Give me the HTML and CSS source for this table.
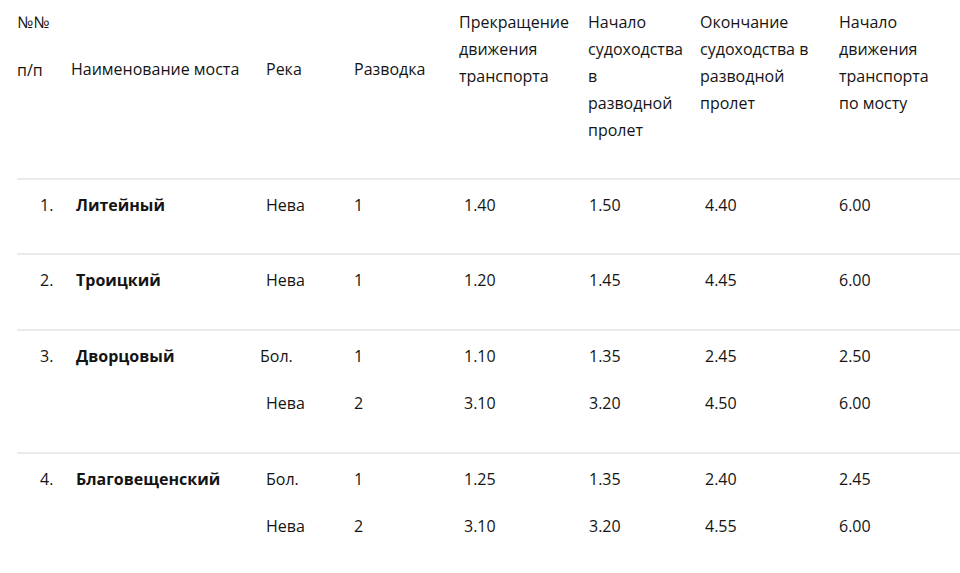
FILE: index.html
```html
<!DOCTYPE html>
<html lang="ru">
<head>
<meta charset="utf-8">
<title>График разводки мостов</title>
<link rel="stylesheet" href="styles.css">
</head>
<body>
<table class="bridges">
  <colgroup>
    <col class="c-num">
    <col class="c-name">
    <col class="c-river">
    <col class="c-lift">
    <col class="c-stop">
    <col class="c-open">
    <col class="c-close">
    <col class="c-resume">
  </colgroup>
  <thead>
    <tr>
      <th><p>№№</p><p>п/п</p></th>
      <th class="low"><p>Наименование моста</p></th>
      <th class="low"><p>Река</p></th>
      <th class="low"><p>Разводка</p></th>
      <th><p>Прекращение<br>движения<br>транспорта</p></th>
      <th><p>Начало<br>судоходства<br>в<br>разводной<br>пролет</p></th>
      <th><p>Окончание<br>судоходства в<br>разводной<br>пролет</p></th>
      <th><p>Начало<br>движения<br>транспорта<br>по мосту</p></th>
    </tr>
  </thead>
  <tbody>
    <tr>
      <td class="num"><p>1.</p></td>
      <td class="name"><p>Литейный</p></td>
      <td><p>Нева</p></td>
      <td><p>1</p></td>
      <td class="ind5"><p>1.40</p></td>
      <td class="ind1"><p>1.50</p></td>
      <td class="ind5"><p>4.40</p></td>
      <td><p>6.00</p></td>
    </tr>
    <tr>
      <td class="num"><p>2.</p></td>
      <td class="name"><p>Троицкий</p></td>
      <td><p>Нева</p></td>
      <td><p>1</p></td>
      <td class="ind5"><p>1.20</p></td>
      <td class="ind1"><p>1.45</p></td>
      <td class="ind5"><p>4.45</p></td>
      <td><p>6.00</p></td>
    </tr>
    <tr>
      <td class="num"><p>3.</p></td>
      <td class="name"><p>Дворцовый</p></td>
      <td><p class="out">Бол.</p><p>Нева</p></td>
      <td><p>1</p><p>2</p></td>
      <td class="ind5"><p>1.10</p><p>3.10</p></td>
      <td class="ind1"><p>1.35</p><p>3.20</p></td>
      <td class="ind5"><p>2.45</p><p>4.50</p></td>
      <td><p>2.50</p><p>6.00</p></td>
    </tr>
    <tr>
      <td class="num"><p>4.</p></td>
      <td class="name"><p>Благовещенский</p></td>
      <td><p>Бол.</p><p>Нева</p></td>
      <td><p>1</p><p>2</p></td>
      <td class="ind5"><p>1.25</p><p>3.10</p></td>
      <td class="ind1"><p>1.35</p><p>3.20</p></td>
      <td class="ind5"><p>2.40</p><p>4.55</p></td>
      <td><p>2.45</p><p>6.00</p></td>
    </tr>
  </tbody>
</table>
</body>
</html>
```
FILE: styles.css
```css
html, body {
  margin: 0;
  padding: 0;
  background: #ffffff;
}

body {
  font-family: "Open Sans", "Noto Sans", "DejaVu Sans", sans-serif;
  font-size: 16px;
  line-height: 27px;
  color: #141414;
  overflow: hidden;
}

.bridges {
  margin-left: 17px;
  width: 980px;
  border-collapse: collapse;
  table-layout: fixed;
}

.c-num { width: 54px; }
.c-name { width: 195px; }
.c-river { width: 88px; }
.c-lift { width: 105px; }
.c-stop { width: 129px; }
.c-open { width: 112px; }
.c-close { width: 139px; }
.c-resume { width: 158px; }

.bridges th,
.bridges td {
  padding: 0 0 14px 0;
  text-align: left;
  vertical-align: top;
  font-weight: 400;
}

.bridges th {
  padding-top: 9px;
  padding-bottom: 13px;
  white-space: nowrap;
}

.bridges th.low {
  padding-top: 56px;
}

.bridges td {
  padding-top: 12px;
  white-space: nowrap;
}

.bridges tbody tr {
  border-top: 2px solid #ebebeb;
}

.bridges p {
  margin: 0 0 20.5px 0;
}

.bridges td.num {
  padding-left: 23px;
}

.bridges td.name {
  padding-left: 5px;
  font-weight: 700;
}

.bridges td.ind5 {
  padding-left: 5px;
}

.bridges td.ind1 {
  padding-left: 1px;
}

.bridges p.out {
  margin-left: -6px;
}
```
